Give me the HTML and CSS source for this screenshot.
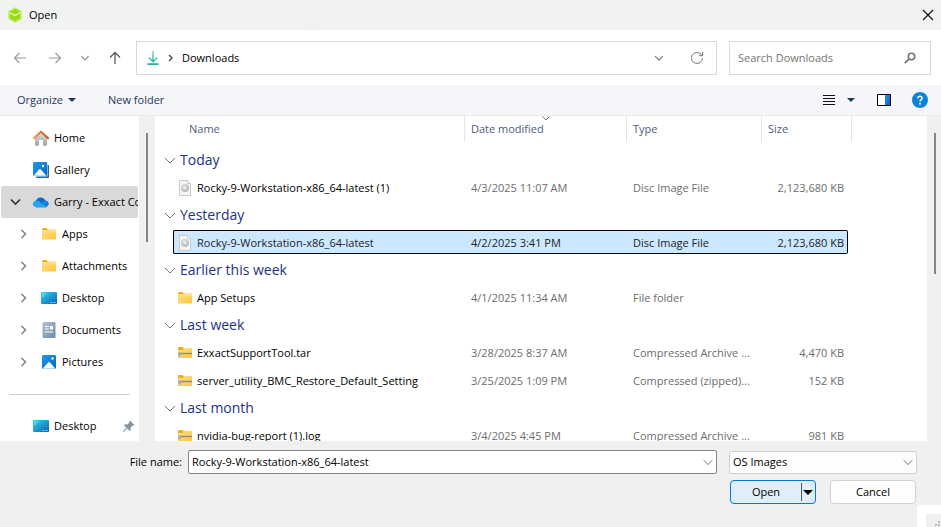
FILE: index.html
```
<!DOCTYPE html>
<html lang="en">
<head>
<meta charset="utf-8">
<meta name="viewport" content="width=device-width, initial-scale=1">
<title>Open</title>
<link rel="stylesheet" href="styles.css">
</head>
<body>

<!-- shared icons -->
<svg class="defs" width="0" height="0" aria-hidden="true">
  <defs>
    <linearGradient id="g-folder" x1="0" y1="0" x2="1" y2="1"><stop offset="0" stop-color="#ffe08a"/><stop offset="1" stop-color="#fbc63c"/></linearGradient>
    <linearGradient id="g-desk" x1="0" y1="0" x2="1" y2="1"><stop offset="0" stop-color="#35d3e6"/><stop offset="1" stop-color="#0a62b8"/></linearGradient>
    <linearGradient id="g-blue" x1="0" y1="0" x2="1" y2="1"><stop offset="0" stop-color="#1a9be8"/><stop offset="1" stop-color="#0b66c0"/></linearGradient>
    <linearGradient id="g-doc" x1="0" y1="0" x2="1" y2="1"><stop offset="0" stop-color="#b3c3d6"/><stop offset="1" stop-color="#6c87a6"/></linearGradient>
    <linearGradient id="g-home" x1="0" y1="0" x2="0" y2="1"><stop offset="0" stop-color="#e0e0e0"/><stop offset="1" stop-color="#a3a3a3"/></linearGradient>
    <linearGradient id="g-roof" x1="0" y1="0" x2="1" y2="0"><stop offset="0" stop-color="#f59a3c"/><stop offset="1" stop-color="#d04f14"/></linearGradient>
    <linearGradient id="g-down" x1="0" y1="0" x2="0" y2="1"><stop offset="0" stop-color="#6fdcb4"/><stop offset="1" stop-color="#22ae9c"/></linearGradient>
    <radialGradient id="g-disc" cx=".4" cy=".35" r=".7"><stop offset="0" stop-color="#e8eaeb"/><stop offset="1" stop-color="#adb2b6"/></radialGradient>
  </defs>
  <symbol id="i-folder" viewBox="0 0 16 16">
    <path d="M1 3.500C1 2.700 1.500 2 2.300 2h3.200l1.500 1.700h7.400c.4 0 .6.3.6.7V7H1z" fill="#f0ad1c"/>
    <rect x="1" y="4" width="14" height="9.500" rx=".8" fill="url(#g-folder)"/>
    <path d="M1 5.500V4.800h4.600L7.300 3.500H14.500c.3 0 .5.200.5.500v2z" fill="#ffdf88"/>
  </symbol>
  <symbol id="i-zip" viewBox="0 0 16 16">
    <path d="M1 3C1 2.400 1.400 2 2 2h3.500L7 3.500h7.500c.3 0 .5.200.5.500v3H1z" fill="#f0ad1c"/>
    <path d="M1 5h4.700l1.500-1.500H15v9.500H1z" fill="url(#g-folder)"/>
    <rect x="2" y="7.500" width="13" height="2" fill="#c9b477"/>
    <path d="M4 8h11v1H4z" fill="#918a78"/>
    <path d="M1 7.500h3v4H2v-1H1z" fill="#a9aeb5"/>
  </symbol>
  <symbol id="i-disc" viewBox="0 0 16 16">
    <path d="M2.500.5h8l3 3v12h-11z" fill="#f6f6f6" stroke="#c9c9c9"/>
    <path d="M10.500.5v3h3" fill="#fff" stroke="#c9c9c9"/>
    <circle cx="8" cy="8" r="4" fill="url(#g-disc)"/>
    <circle cx="8" cy="8" r="1" fill="#eee"/>
  </symbol>
  <symbol id="i-desktop" viewBox="0 0 16 16">
    <rect y="2" width="16" height="12" rx="1" fill="url(#g-desk)"/>
    <path d="M1.500 4h1.300M1.500 6h1.300M4 4h1" stroke="#d8fbff"/>
    <path d="M9.500 12.500h2M12.500 12.500h2" stroke="#8fd0f5"/>
  </symbol>
  <symbol id="i-document" viewBox="0 0 16 16">
    <rect x="1.500" width="13" height="16" rx="1.300" fill="url(#g-doc)"/>
    <path d="M4 4.500h4M4 7h4M4 10h8" stroke="#fff" stroke-width="1.200"/>
    <rect x="9" y="4" width="3" height="3.500" fill="#fff"/>
  </symbol>
  <symbol id="i-picture" viewBox="0 0 16 16">
    <rect x="1" y="1" width="14" height="14" rx="1.200" fill="url(#g-blue)"/>
    <path d="M1.500 14.700 7 8.500q1-1 2 0l5.500 6.200z" fill="#f4faff"/>
    <circle cx="11.500" cy="4.500" r="1.200" fill="#fff"/>
  </symbol>
  <symbol id="i-gallery" viewBox="0 0 16 16">
    <path d="M3 3h12q1 0 1 1v11q0 1-1 1H4q-1 0-1-1z" fill="#1767b4"/>
    <path d="M14.200 2v12.200H3" fill="none" stroke="#d6e9f8" stroke-width=".8"/>
    <rect width="14" height="14" rx="1.200" fill="url(#g-blue)"/>
    <path d="M.5 13.700 6 7.500q.9-.9 1.800 0l5.700 6.200z" fill="#f4faff"/>
    <circle cx="10" cy="4" r="1.200" fill="#fff"/>
  </symbol>
  <symbol id="i-home" viewBox="0 0 16 16">
    <path d="M2 7.500 8 2l6 5.500V15q0 .7-.7.7H10V10H6v5.700H2.700Q2 15.700 2 15z" fill="url(#g-home)"/>
    <path d="M.9 8.200 8 1.700l7.100 6.500" fill="none" stroke="url(#g-roof)" stroke-width="2" stroke-linecap="round" stroke-linejoin="round"/>
  </symbol>
  <symbol id="i-cloud" viewBox="0 0 16 16">
    <path d="M3.600 13.300A3.600 3.600 0 0 1 3 6.400a5 5 0 0 1 9.100-.1 3.600 3.600 0 0 1 .4 7z" fill="#0f6cc4"/>
    <path d="M3.600 13.300A3.500 3.500 0 0 1 .4 8.200Q4 5.500 7.500 8.300l6.500 4.500q-.7.5-1.600.5z" fill="#2ba4f0"/>
    <path d="M7 9.800q3-3.400 6-2.900A3.300 3.300 0 0 1 15.700 11z" fill="#1583dc"/>
  </symbol>
  <symbol id="i-right" viewBox="0 0 14 14"><path d="m5.500 3 4 4-4 4" fill="none" stroke="#858585" stroke-width="1.600"/></symbol>
  <symbol id="i-down" viewBox="0 0 14 14"><path d="m2 5 5 5 5-5" fill="none" stroke="currentColor"/></symbol>
  <symbol id="i-caret" viewBox="0 0 8 4"><path d="M0 0h8L4 4z" fill="currentColor"/></symbol>
</svg>

<div class="dialog">
  <header class="titlebar">
    <svg class="logo" width="16" height="16" viewBox="0 0 16 16"><path d="M8 .3 14.700 4v8L8 15.700 1.300 12V4z" fill="#bdec5a"/><path d="M8 2 13 4.800v6.400L8 14 3 11.200V4.800z" fill="#9bd71d"/><path d="m2.500 5.500 5.500 3 5.500-3" fill="none" stroke="#e9fbbd" stroke-width="1.200"/></svg>
    <h1>Open</h1>
    <button class="plain close" aria-label="Close"><svg width="12" height="12" viewBox="0 0 12 12"><path d="m1 1 10 10M11 1 1 11" stroke="#111" stroke-width="1.200"/></svg></button>
  </header>

  <nav class="navbar">
    <div class="history">
      <button class="plain faded" aria-label="Back"><svg width="14" height="14" viewBox="0 0 14 14"><path d="M13 7H1.500M6.500 2l-5 5 5 5" fill="none" stroke="currentColor" stroke-width="1.200"/></svg></button>
      <button class="plain faded" aria-label="Forward"><svg width="14" height="14" viewBox="0 0 14 14"><path d="M1 7h11.500M7.500 2l5 5-5 5" fill="none" stroke="currentColor" stroke-width="1.200"/></svg></button>
      <button class="plain recent" aria-label="Recent locations"><svg width="10" height="10" viewBox="0 0 14 14"><path d="m2 4.500 5 5 5-5" fill="none" stroke="currentColor" stroke-width="1.600"/></svg></button>
      <button class="plain" aria-label="Up"><svg width="14" height="14" viewBox="0 0 14 14"><path d="M7 13V1.500M2 6.500l5-5 5 5" fill="none" stroke="currentColor" stroke-width="1.300"/></svg></button>
    </div>
    <div class="address">
      <svg width="12" height="14" viewBox="0 0 12 14"><path d="M6 0v10.500M1.800 6.500 6 10.700l4.200-4.200M.5 13.300h11" fill="none" stroke="url(#g-down)" stroke-width="1.500"/><path d="M.5 13h11" stroke="#2fb5a1" stroke-width="1.200"/></svg>
      <svg width="6" height="8" viewBox="0 0 6 8"><path d="m1 1 3 3-3 3" fill="none" stroke="#555" stroke-width="1.500"/></svg>
      <a href="#">Downloads</a>
      <button class="plain drop" aria-label="Previous locations"><svg width="10" height="10" viewBox="0 0 14 14"><path d="m1.500 4.500 5.500 5.500 5.500-5.500" fill="none" stroke="currentColor" stroke-width="1.500"/></svg></button>
      <button class="plain" aria-label="Refresh"><svg width="14" height="14" viewBox="0 0 14 14"><path d="M12.500 7A5.500 5.500 0 1 1 11 3.200L12.300 4.500M12.500 1v3.700H8.800" fill="none" stroke="currentColor"/></svg></button>
    </div>
    <div class="search">
      <input type="text" placeholder="Search Downloads" aria-label="Search Downloads">
      <svg width="12" height="12" viewBox="0 0 12 12"><circle cx="7.500" cy="4.500" r="3.200" fill="none" stroke="#757575" stroke-width="1.600"/><path d="M5.200 6.800.8 11.200" stroke="#757575" stroke-width="1.800"/></svg>
    </div>
  </nav>

  <div class="toolbar">
    <button class="plain">Organize <svg width="8" height="4"><use href="#i-caret"/></svg></button>
    <button class="plain">New folder</button>
    <div class="views">
      <button class="plain" aria-label="View"><svg width="12" height="12" viewBox="0 0 12 12"><path d="M0 1.500h12M0 4.500h12M0 7.500h12M0 10.500h12" stroke="#111"/></svg></button>
      <button class="plain more" aria-label="More view options"><svg width="8" height="4"><use href="#i-caret"/></svg></button>
      <button class="plain preview" aria-label="Preview pane"><svg width="14" height="12" viewBox="0 0 14 12"><path d="M.5.5h13v11H.5z" fill="#fff" stroke="#000"/><path d="M8 1h5v10H8z" fill="url(#g-blue)"/></svg></button>
      <button class="plain" aria-label="Help"><svg width="16" height="16" viewBox="0 0 16 16"><circle cx="8" cy="8" r="8" fill="#0b83da"/><path d="M5.900 6.300c0-2.700 4.200-2.700 4.200-.1 0 1.600-2.100 1.600-2.100 3.300" fill="none" stroke="#fff" stroke-width="1.500"/><circle cx="8" cy="11.700" r="1" fill="#fff"/></svg></button>
    </div>
  </div>

  <main class="panes">
    <aside class="tree">
      <ul>
        <li><a href="#"><span class="twisty"></span><svg class="icon"><use href="#i-home"/></svg>Home</a></li>
        <li><a href="#"><span class="twisty"></span><svg class="icon"><use href="#i-gallery"/></svg>Gallery</a></li>
        <li>
          <a href="#" class="current"><svg class="twisty" viewBox="0 0 14 14"><path d="m3 4.500 4.500 4.500L12 4.500" fill="none" stroke="#333" stroke-width="1.700"/></svg><svg class="icon"><use href="#i-cloud"/></svg>Garry - Exxact Co</a>
          <ul class="nested">
            <li><a href="#"><svg class="twisty"><use href="#i-right"/></svg><svg class="icon"><use href="#i-folder"/></svg>Apps</a></li>
            <li><a href="#"><svg class="twisty"><use href="#i-right"/></svg><svg class="icon"><use href="#i-folder"/></svg>Attachments</a></li>
            <li><a href="#"><svg class="twisty"><use href="#i-right"/></svg><svg class="icon"><use href="#i-desktop"/></svg>Desktop</a></li>
            <li><a href="#"><svg class="twisty"><use href="#i-right"/></svg><svg class="icon"><use href="#i-document"/></svg>Documents</a></li>
            <li><a href="#"><svg class="twisty"><use href="#i-right"/></svg><svg class="icon"><use href="#i-picture"/></svg>Pictures</a></li>
          </ul>
        </li>
        <li class="divider"></li>
        <li><a href="#"><span class="twisty"></span><svg class="icon"><use href="#i-desktop"/></svg>Desktop <svg class="pin" width="12" height="12" viewBox="0 0 12 12"><path d="m7 .5 4.500 4.500-1 .7-.9-.1-2 2.100.1 2.400-1 1-2.500-2.500L.8 12 0 11.200l3.400-3.400L.9 5.300l1-1 2.400.1 2.100-2-.1-.9z" fill="#8795a3"/></svg></a></li>
      </ul>
    </aside>
    <div class="scrollbar tree-scroll"><span></span></div>

    <div class="files">
      <table>
        <colgroup><col class="c-indent"><col class="c-name"><col class="c-date"><col class="c-type"><col class="c-size"><col class="c-edge"><col></colgroup>
        <thead>
          <tr>
            <th></th>
            <th><span class="name-head">Name</span></th>
            <th><span>Date modified<svg class="sort" width="8" height="5" viewBox="0 0 8 5"><path d="m.5.500 3.500 3.500L7.500.5" fill="none" stroke="#777"/></svg></span></th>
            <th><span>Type</span></th>
            <th><span class="size-head">Size</span></th>
            <th><span class="edge-head"></span></th>
            <th></th>
          </tr>
        </thead>
        <tbody>
          <tr class="group"><th colspan="7"><svg><use href="#i-down"/></svg>Today</th></tr>
          <tr><td></td><td><div><svg class="icon"><use href="#i-disc"/></svg>Rocky-9-Workstation-x86_64-latest (1)</div></td><td><div>4/3/2025 11:07 AM</div></td><td><div>Disc Image File</div></td><td class="size"><div>2,123,680 KB</div></td></tr>
        </tbody>
        <tbody>
          <tr class="group"><th colspan="7"><svg><use href="#i-down"/></svg>Yesterday</th></tr>
          <tr class="selected"><td></td><td><div><svg class="icon"><use href="#i-disc"/></svg>Rocky-9-Workstation-x86_64-latest</div></td><td><div>4/2/2025 3:41 PM</div></td><td><div>Disc Image File</div></td><td class="size"><div>2,123,680 KB</div></td></tr>
        </tbody>
        <tbody>
          <tr class="group"><th colspan="7"><svg><use href="#i-down"/></svg>Earlier this week</th></tr>
          <tr><td></td><td><div><svg class="icon"><use href="#i-folder"/></svg>App Setups</div></td><td><div>4/1/2025 11:34 AM</div></td><td><div>File folder</div></td><td class="size"></td></tr>
        </tbody>
        <tbody>
          <tr class="group"><th colspan="7"><svg><use href="#i-down"/></svg>Last week</th></tr>
          <tr><td></td><td><div><svg class="icon"><use href="#i-zip"/></svg>ExxactSupportTool.tar</div></td><td><div>3/28/2025 8:37 AM</div></td><td><div>Compressed Archive ...</div></td><td class="size"><div>4,470 KB</div></td></tr>
          <tr><td></td><td><div><svg class="icon"><use href="#i-zip"/></svg>server_utility_BMC_Restore_Default_Setting</div></td><td><div>3/25/2025 1:09 PM</div></td><td><div>Compressed (zipped)...</div></td><td class="size"><div>152 KB</div></td></tr>
        </tbody>
        <tbody>
          <tr class="group"><th colspan="7"><svg><use href="#i-down"/></svg>Last month</th></tr>
          <tr><td></td><td><div><svg class="icon"><use href="#i-zip"/></svg>nvidia-bug-report (1).log</div></td><td><div>3/4/2025 4:45 PM</div></td><td><div>Compressed Archive ...</div></td><td class="size"><div>981 KB</div></td></tr>
        </tbody>
      </table>
    </div>
    <div class="scrollbar file-scroll"><span></span></div>
  </main>

  <footer class="footer">
    <div class="fields">
      <label for="filename">File name:</label>
      <div class="combo">
        <input type="text" id="filename" value="Rocky-9-Workstation-x86_64-latest">
        <button class="plain" aria-label="Previous file names"><svg width="12" height="12"><use href="#i-down"/></svg></button>
      </div>
      <div class="filter">
        <select aria-label="File type"><option>OS Images</option></select>
        <svg width="12" height="12"><use href="#i-down"/></svg>
      </div>
    </div>
    <div class="actions">
      <div class="split">
        <button class="open">Open</button>
        <button class="open-more" aria-label="More open options"><svg width="10" height="5"><use href="#i-caret"/></svg></button>
      </div>
      <button class="cancel">Cancel</button>
    </div>
    <div class="grip"><svg width="15" height="13" viewBox="0 0 15 13"><path d="M0 0h15v13H0z" fill="#f0f0f0"/><path d="M12 7h2v2h-2zM9 10h2v2H9zM12 10h2v2h-2z" fill="#bbb"/></svg></div>
  </footer>
</div>

</body>
</html>
```
FILE: styles.css
```
* {
  box-sizing: border-box;
}

body {
  margin: 0;
  font-family: "Open Sans", "Noto Sans", sans-serif;
  font-size: 11px;
  line-height: 16px;
  color: #000;
  background: #f0f0f0;
}

input, select, button {
  font: inherit;
  color: inherit;
}

a {
  color: inherit;
  text-decoration: none;
}

svg {
  flex: none;
}

ul {
  list-style: none;
  margin: 0;
  padding: 0;
}

.defs {
  position: absolute;
}

.dialog {
  display: flex;
  flex-direction: column;
  height: 100vh;
  overflow: hidden;
}

.plain {
  display: flex;
  align-items: center;
  padding: 0;
  border: 0;
  background: none;
}

.icon {
  width: 16px;
  height: 16px;
}

/* title bar */
.titlebar {
  display: flex;
  align-items: center;
  flex: none;
  height: 30px;
  padding: 0 7px;
  gap: 6px;
  background: linear-gradient(90deg, #f0f3f0, #f3f2f2);
}

.titlebar h1 {
  margin: 0;
  font-size: 11px;
  font-weight: normal;
}

.close {
  margin-left: auto;
}

/* navigation */
.navbar {
  display: flex;
  align-items: center;
  flex: none;
  height: 55px;
  padding: 0 10px 0 13px;
  background: #fff;
}

.history {
  display: flex;
  width: 123px;
  gap: 21px;
  color: #5c5c5c;
}

.faded {
  color: #999;
}

.recent {
  margin: 0 -3px;
  color: #888;
}

.address {
  display: flex;
  align-items: center;
  flex: 1;
  height: 34px;
  margin-right: 12px;
  padding: 0 12px 0 10px;
  border: 1px solid #d9d9d9;
}

.address a {
  margin-left: 8px;
}

.address svg + svg {
  margin-left: 9px;
}

.address .plain {
  color: #777;
}

.address .drop {
  margin-left: auto;
  margin-right: 26px;
}

.search {
  display: flex;
  align-items: center;
  width: 202px;
  height: 34px;
  padding: 0 14px 0 8px;
  border: 1px solid #d9d9d9;
}

.search input {
  flex: 1;
  min-width: 0;
  padding: 0;
  border: 0;
  outline: 0;
}

.search input::placeholder {
  color: #757575;
}

/* command bar */
.toolbar {
  display: flex;
  align-items: center;
  flex: none;
  height: 31px;
  padding: 0 13px 0 17px;
  gap: 32px;
  border-bottom: 1px solid #e6e8eb;
  background: #f4f6f9;
  color: #1e395b;
}

.toolbar button {
  gap: 5px;
}

.views {
  display: flex;
  align-items: center;
  margin-left: auto;
}

.views .more {
  margin-left: 12px;
}

.views .preview {
  margin: 0 21px 0 22px;
}

/* panes */
.panes {
  display: flex;
  flex: 1;
  min-height: 0;
  background: #fff;
}

.tree {
  flex: none;
  width: 139px;
  padding: 6px 1px 0;
  overflow: hidden;
}

.tree a {
  display: flex;
  align-items: center;
  height: 32px;
  padding-left: 7px;
  gap: 5px;
  white-space: nowrap;
  overflow: hidden;
}

.tree .nested a {
  padding-left: 15px;
}

.tree .current {
  border-radius: 2px;
  background: #d9d9d9;
}

.twisty {
  flex: none;
  width: 14px;
  height: 14px;
  margin-right: 6px;
}

.tree .pin {
  margin-left: auto;
  margin-right: 3px;
}

.divider {
  height: 32px;
  padding: 16px 8px 0;
}

.divider::before {
  content: "";
  display: block;
  border-top: 1px solid #ccc;
}

.scrollbar {
  flex: none;
  padding: 17px 5px 0 7px;
  background: #f0f0f0;
}

.scrollbar span {
  display: block;
  width: 2px;
  background: #858585;
}

.tree-scroll {
  width: 16px;
}

.tree-scroll span {
  height: 109px;
}

.file-scroll {
  width: 14px;
}

.file-scroll span {
  height: 141px;
}

/* file list */
.files {
  flex: 1;
  min-width: 0;
  overflow: hidden;
}

table {
  width: 100%;
  table-layout: fixed;
  border-collapse: collapse;
}

.c-indent { width: 18px; }
.c-name { width: 292px; }
.c-date { width: 162px; }
.c-type { width: 135px; }
.c-size { width: 86px; }
.c-edge { width: 4px; }

th, td {
  padding: 0;
  text-align: left;
  font-weight: normal;
  white-space: nowrap;
}

thead th {
  height: 31px;
  vertical-align: top;
  color: #4c607a;
}

thead span {
  display: block;
  position: relative;
  height: 26px;
  padding-left: 6px;
  border-right: 1px solid #e5e5e5;
  line-height: 26px;
}

thead .name-head {
  padding-left: 16px;
}

thead .size-head {
  border-right: 0;
}

thead .edge-head {
  padding: 0;
}

.sort {
  position: absolute;
  top: 0;
  left: 50%;
  margin-left: -4px;
}

.group th {
  height: 27px;
  padding-left: 8px;
  font-size: 14px;
  line-height: 25px;
  vertical-align: top;
  color: #1e3287;
}

.group svg {
  width: 14px;
  height: 14px;
  margin-right: 3px;
  vertical-align: -2px;
  color: #777;
}

td {
  height: 28px;
  padding: 1px 0 3px;
  color: #6d6d6d;
}

td div {
  display: flex;
  align-items: center;
  height: 24px;
  padding: 1px 6px 0;
  border: solid transparent;
  border-width: 1px 0;
}

td:nth-child(2) div {
  padding-left: 4px;
  gap: 4px;
  color: #000;
}

td.size div {
  justify-content: flex-end;
  padding-right: 4px;
}

.selected td div {
  border-color: #000;
  background: #cce8ff;
  color: #222;
}

.selected td:nth-child(2) div {
  padding-left: 3px;
  border-left-width: 1px;
  border-radius: 2px 0 0 2px;
}

.selected td.size div {
  padding-right: 3px;
  border-right-width: 1px;
  border-radius: 0 2px 2px 0;
}

/* footer */
.footer {
  position: relative;
  flex: none;
  height: 86px;
  padding: 9px 24px 0 0;
  background: #f0f0f0;
}

.fields {
  display: flex;
  align-items: center;
}

.fields label {
  width: 188px;
  padding-right: 6px;
  text-align: right;
}

.combo {
  display: flex;
  flex: 1;
  height: 24px;
  padding-right: 2px;
  border: 1px solid #868686;
  border-radius: 2px;
  background: #fff;
}

.combo input {
  flex: 1;
  min-width: 0;
  padding: 0 3px;
  border: 0;
  outline: 0;
  background: none;
}

.combo button,
.filter svg {
  color: #555;
}

.filter {
  display: grid;
  align-items: center;
  width: 188px;
  height: 23px;
  margin-left: 12px;
}

.filter select,
.filter svg {
  grid-area: 1 / 1;
}

.filter select {
  height: 23px;
  padding: 0 3px;
  border: 1px solid #d0d0d0;
  border-radius: 2px;
  background: #fdfdfd;
  appearance: none;
}

.filter svg {
  justify-self: end;
  margin-right: 3px;
  pointer-events: none;
}

.actions {
  display: flex;
  justify-content: flex-end;
  gap: 14px;
  padding: 6px 1px 0 0;
}

.split {
  display: flex;
  align-items: center;
  width: 86px;
  height: 24px;
  border: 1px solid #0078d4;
  border-radius: 4px;
  background: #e0eef9;
}

.split button {
  height: 18px;
  padding: 0;
  border: 0;
  background: none;
}

.split .open {
  flex: 1;
}

.split .open-more {
  display: flex;
  align-items: center;
  width: 14px;
  padding-left: 1px;
  border-left: 1px solid #555;
}

.cancel {
  width: 86px;
  height: 24px;
  padding: 0;
  border: 1px solid #d0d0d0;
  border-radius: 4px;
  background: #fdfdfd;
}

.grip {
  position: absolute;
  right: 0;
  bottom: 0;
  display: flex;
  padding: 9px 0 0 9px;
  background: #fff;
}
```
